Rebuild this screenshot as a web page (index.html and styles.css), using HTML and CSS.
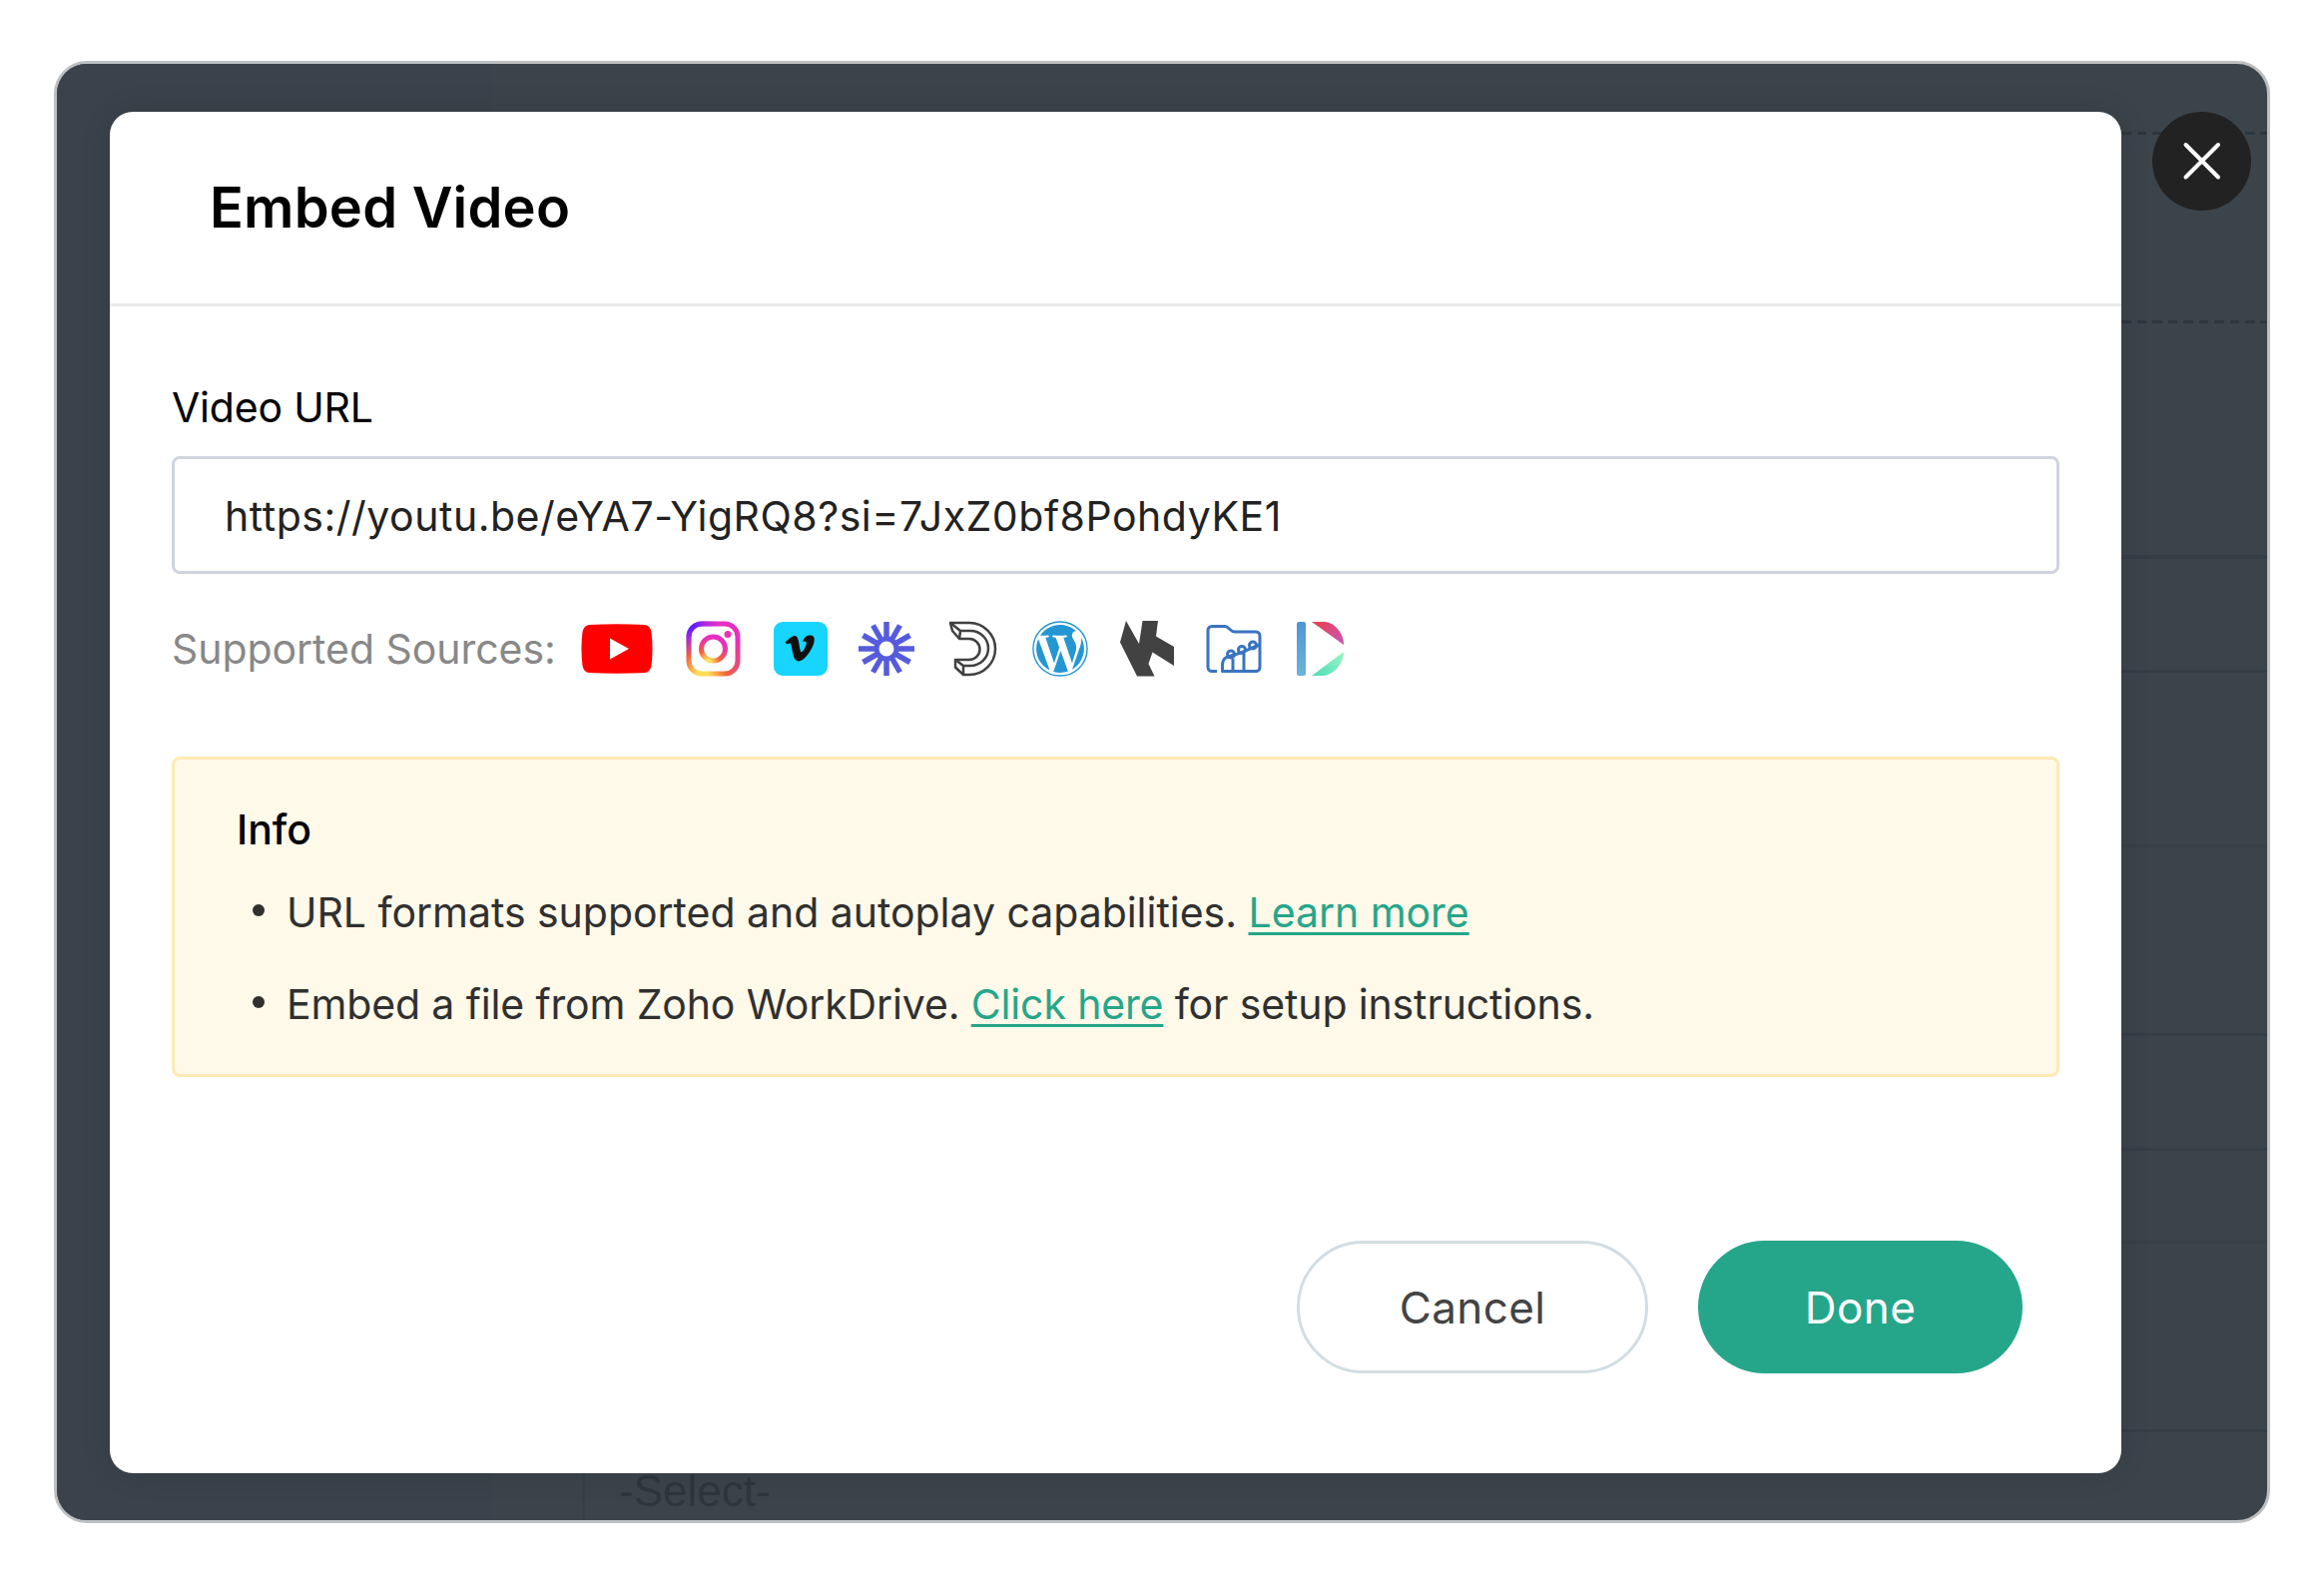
FILE: index.html
```html
<!DOCTYPE html>
<html lang="en">
<head>
    <meta charset="UTF-8">
    <title>Embed Video</title>
    <link rel="stylesheet" href="styles.css">
</head>
<body>
<div class="screen">
    <!-- form builder behind the popup -->
    <div class="form-bg">
        <div class="sidebar"></div>
        <div class="canvas">
            <div class="row dashed r1"></div>
            <div class="row dashed r2"></div>
            <div class="row thick r3"></div>
            <div class="row r4"></div>
            <div class="row light r5"></div>
            <div class="row r6"></div>
            <div class="row r7"></div>
            <div class="row light r8"></div>
            <div class="row r9"></div>
            <div class="select-box">-Select-</div>
        </div>
    </div>

    <div class="popup">
        <div class="popup-header"><h1>Embed Video</h1></div>
        <div class="popup-body">
            <label class="field-label" for="url">Video URL</label>
            <input class="url-input" id="url" type="text" value="https://youtu.be/eYA7-YigRQ8?si=7JxZ0bf8PohdyKE1">

            <div class="sources">
                <span class="sources-label">Supported Sources:</span>
                <svg class="icon-youtube" width="72" height="52" viewBox="0 0 72 52">
                    <path d="M8 2Q36 .5 64 2 69 2.500 70.500 9 72.500 26 70.500 43 69 49.500 64 50 36 51.500 8 50 3 49.500 1.500 43-.5 26 1.500 9 3 2.500 8 2z" fill="#f00"/>
                    <path d="M29 15.500v21L48 26z" fill="#fff"/>
                </svg>
                <svg class="icon-instagram" width="56" height="56" viewBox="0 0 56 56" fill="none">
                    <defs>
                        <radialGradient id="ig" cx=".28" cy="1.06" r="1.02">
                            <stop offset="0" stop-color="#fd5"/>
                            <stop offset=".12" stop-color="#fd5"/>
                            <stop offset=".5" stop-color="#f0603e"/>
                            <stop offset="1" stop-color="#e62fc0"/>
                        </radialGradient>
                        <radialGradient id="ig2" cx="0" cy="0" r=".65">
                            <stop offset="0" stop-color="#4a20ff"/>
                            <stop offset=".2" stop-color="#6a20ff"/>
                            <stop offset="1" stop-color="#b02cf0" stop-opacity="0"/>
                        </radialGradient>
                    </defs>
                    <rect x="3" y="3" width="49" height="50" rx="13" stroke="url(#ig)" stroke-width="5"/>
                    <rect x="3" y="3" width="49" height="50" rx="13" stroke="url(#ig2)" stroke-width="5"/>
                    <circle cx="27.500" cy="28" r="12" stroke="url(#ig)" stroke-width="5"/>
                    <circle cx="42" cy="13.500" r="3.500" fill="#ee2fb5"/>
                </svg>
                <svg class="icon-vimeo" width="54" height="54" viewBox="0 0 54 54">
                    <rect width="54" height="54" rx="9" fill="#17d5ff"/>
                    <path d="M11.500 20.500c3-2.500 6-6 9-6.500 5-.5 4.500 8 6 14 .8 3.500 2 3 4.500-1.500 3-5.500 2-8-2-6.500 1.500-4.500 4-7 8-6.500 4.500.5 4.500 5 2.500 10C37 30 30 39.500 25 39.500c-5.500 0-5.500-8.500-7.500-16-.8-2.500-1.500-2.500-4-1z" fill="#101010"/>
                </svg>
                <svg class="icon-loom" width="56" height="56" viewBox="0 0 56 56" fill="none" stroke="#565bdd" stroke-width="5.500">
                    <circle cx="28" cy="28" r="10" stroke-width="5"/>
                    <path d="M28 1v17M28 38v17M0 28h18M38 28h18M14.500 4.500l8 14M33.500 37.500l8 14M4.500 14.500l14 8M37.500 33.500l14 8M4.500 41.500l14-8M37.500 22.500l14-8M14.500 51.500l8-14M33.500 18.500l8-14"/>
                </svg>
                <svg class="icon-dacast" width="50" height="56" viewBox="0 0 50 56" fill="none" stroke="#404040" stroke-width="2.500" stroke-linejoin="round">
                    <path d="M2 2h19a26 26 0 0 1 0 52h-6l-8-7.500V39h14a10.500 10.500 0 0 0 0-21H11L4 10z"/>
                    <path d="M2 2l10 8h10a18 17.500 0 0 1 0 35h-7v9M12 10l-1 8M15 45l-8-6"/>
                </svg>
                <svg class="icon-wordpress" width="56" height="56" viewBox="0 0 24 24" fill="#2497d3">
                    <circle cx="12" cy="12" r="11.600" fill="none" stroke="#2497d3" stroke-width=".6"/>
                    <path transform="translate(.6 .6) scale(.95)" d="M21.469 6.825c.84 1.537 1.318 3.300 1.318 5.175 0 3.979-2.156 7.456-5.363 9.325l3.295-9.527c.615-1.540.82-2.771.82-3.864 0-.405-.026-.78-.07-1.110m-7.981.105c.647-.03 1.232-.105 1.232-.105.582-.075.514-.93-.067-.899 0 0-1.755.135-2.880.135-1.064 0-2.850-.15-2.850-.15-.585-.03-.661.855-.075.885 0 0 .54.061 1.125.09l1.680 4.605-2.370 7.080L5.354 6.900c.649-.03 1.234-.1 1.234-.1.585-.075.516-.93-.065-.896 0 0-1.746.138-2.874.138-.2 0-.438-.008-.69-.015C4.911 3.150 8.235 1.215 12 1.215c2.809 0 5.365 1.072 7.286 2.833-.046-.003-.091-.009-.141-.009-1.060 0-1.812.923-1.812 1.914 0 .89.513 1.643 1.060 2.531.411.72.89 1.643.89 2.977 0 .915-.354 1.994-.821 3.479l-1.075 3.585-3.900-11.610.001.014zM12 22.784c-1.059 0-2.081-.153-3.048-.437l3.237-9.406 3.315 9.087c.024.053.05.101.078.149-1.120.393-2.325.609-3.582.609M1.211 12c0-1.564.336-3.050.935-4.390L7.290 21.709C3.694 19.960 1.212 16.271 1.211 12"/>
                </svg>
                <svg class="icon-kinescope" width="56" height="56" viewBox="0 0 56 56">
                    <path d="M6 0l13 23L22.500 0H38l-2 15.500L54 26v19L32.500 31.500 28.500 43l6 12.500H17L0 21.500z" fill="#424242"/>
                </svg>
                <svg class="icon-workdrive" width="56" height="56" viewBox="0 0 56 56" fill="none" stroke="#3a74bf" stroke-width="3" stroke-linejoin="round">
                    <path d="M11 50.500H6a4 4 0 0 1-4-4V9.500a4 4 0 0 1 4-4h13c4 0 5 5.500 10 5.500h21a4 4 0 0 1 4 4v31.500a4 4 0 0 1-4 4H16.500v-6c0-8 6-9 12-10.500s13-5 25-10M27 50V38M38 50V33"/>
                    <circle cx="25" cy="33.500" r="3.500"/>
                    <circle cx="36" cy="29" r="3.500"/>
                    <circle cx="47" cy="24.500" r="3.500"/>
                </svg>
                <svg class="icon-dyntube" width="50" height="56" viewBox="0 0 50 56">
                    <defs>
                        <linearGradient id="d1" x1="0" y1="0" x2="0" y2="1"><stop offset="0" stop-color="#4f96d2"/><stop offset="1" stop-color="#6ab4dc"/></linearGradient>
                        <linearGradient id="d2" x1="0" y1="0" x2="1" y2="1"><stop offset="0" stop-color="#e8404c"/><stop offset="1" stop-color="#cb55b8"/></linearGradient>
                        <linearGradient id="d3" x1="0" y1="1" x2="1" y2="0"><stop offset="0" stop-color="#4bdcb8"/><stop offset="1" stop-color="#9df6c8"/></linearGradient>
                    </defs>
                    <rect y="1" width="9" height="54" rx="2" fill="url(#d1)"/>
                    <path d="M15 1h13c10 1 19 11 19 23z" fill="url(#d2)"/>
                    <path d="M15 55h11c11-1 21-12 21-24z" fill="url(#d3)"/>
                </svg>
            </div>

            <div class="info">
                <h2>Info</h2>
                <ul>
                    <li>URL formats supported and autoplay capabilities. <a href="#">Learn more</a></li>
                    <li>Embed a file from Zoho WorkDrive. <a href="#">Click here</a> for setup instructions.</li>
                </ul>
            </div>

            <div class="actions">
                <button class="btn cancel">Cancel</button>
                <button class="btn done">Done</button>
            </div>
        </div>
    </div>

    <button class="close" aria-label="Close">
        <svg width="40" height="40" viewBox="0 0 40 40" stroke="#fff" stroke-width="4" stroke-linecap="round"><path d="M3.500 3l32.500 32.500M36 3L3.500 35.500"/></svg>
    </button>
</div>
</body>
</html>
```
FILE: styles.css
```css
*{
    margin:0;
    padding:0;
    box-sizing: border-box;
}
body{
    padding:61px 54px 0;
    background: #fff;
    font-family: Inter, "Liberation Sans", sans-serif;
}
.screen{
    position: relative;
    display: flex;
    align-items: flex-start;
    gap:31px;
    width:2220px;
    height:1465px;
    padding:48px 0 0 53px;
    border:3px solid #bdbfc1;
    border-radius: 33px;
    background-color: #3c444b;
    overflow: hidden;
}

/* background form */
.form-bg{
    position: absolute;
    top:0;
    left:0;
    right:0;
    bottom:0;
    display: flex;
}
.sidebar{
    width:436px;
    background-color: #3a424b;
}
.canvas{
    flex:1;
    position: relative;
}
.row{
    position: absolute;
    left:0;
    right:0;
    height:3px;
    background-color: #343e47;
}
.row.thick{
    height:4px;
}
.row.light{
    background-color: #394148;
}
.row.dashed{
    left:1632px;
    background: repeating-linear-gradient(90deg, #2f373e 0 9.5px, transparent 9.5px 15.5px);
}
.r1{ top:68px; }
.r2{ top:257px; }
.r3{ top:492px; }
.r4{ top:607px; }
.r5{ top:782px; }
.r6{ top:971px; }
.r7{ top:1086px; }
.r8{ top:1179px; }
.r9{ top:1368px; }
.select-box{
    position: absolute;
    left:90px;
    bottom:0;
    height:90px;
    padding:36px 0 0 34px;
    border-left:3px solid #36404a;
    font:44px/50px "Liberation Sans", sans-serif;
    color:#2e363d;
}

/* popup */
.popup{
    position: relative;
    width:2015px;
    height:1364px;
    border-radius: 23px;
    background-color: #fff;
    box-shadow: 0 0 30px rgba(0,0,0,.12);
}
.popup-header{
    height:195px;
    padding:62px 0 0 100px;
    border-bottom:3px solid #e9e9e9;
}
.popup-header h1{
    font-size: 56px;
    line-height: 68px;
    font-weight: 600;
    letter-spacing: .2px;
    color:#000;
}
.popup-body{
    padding:76px 62px 0;
}
.field-label{
    display: block;
    height:74px;
    font-size: 41px;
    line-height: 50px;
    letter-spacing: -.2px;
    color:#000;
}
.url-input{
    display: block;
    width:100%;
    height:118px;
    padding:2px 50px 0;
    border:3px solid #cfd4df;
    border-radius: 8px;
    font-family: inherit;
    font-size: 41px;
    letter-spacing: .52px;
    color:#222;
    outline: none;
}
.sources{
    display: flex;
    align-items: center;
    height:56px;
    margin-top:47px;
}
.sources svg{
    flex:none;
}
.sources-label{
    width:410px;
    font-size: 41px;
    letter-spacing: -.05px;
    white-space: nowrap;
    color:#888;
}
.icon-instagram{ margin-left:33px; }
.icon-vimeo{ margin-left:32px; }
.icon-loom{ margin-left:31px; }
.icon-dacast{ margin-left:34px; }
.icon-wordpress{ margin-left:34px; }
.icon-kinescope{ margin-left:32px; }
.icon-workdrive{ margin-left:30px; }
.icon-dyntube{ margin-left:35px; }

.info{
    height:321px;
    margin-top:80px;
    padding:45px 62px 0;
    border:3px solid #ffeab5;
    border-radius: 8px;
    background-color: #fff9e9;
    font-size: 41px;
}
.info h2{
    font-size: 41px;
    line-height: 50px;
    font-weight: 500;
    color:#000;
}
.info ul{
    list-style: none;
    margin-top:12px;
}
.info li{
    display: flex;
    align-items: center;
    height:92px;
    white-space: pre;
    letter-spacing: -.03px;
    color:#303030;
}
.info li:last-child{
    letter-spacing: -.14px;
}
.info li:before{
    content:'';
    width:12px;
    height:12px;
    margin:-5px 22px 0 16px;
    border-radius: 50%;
    background-color: #303030;
}
.info a{
    color:#25a68a;
    text-decoration-thickness: 3px;
    text-underline-offset: 5px;
}

.actions{
    display: flex;
    justify-content: flex-end;
    gap:50px;
    margin-top:164px;
    padding-right:37px;
}
.btn{
    height:133px;
    border-radius: 67px;
    font-family: inherit;
    font-size: 44px;
    letter-spacing: .4px;
    cursor: pointer;
}
.cancel{
    width:352px;
    border:3px solid #d3dde2;
    background-color: #fff;
    color:#444;
}
.done{
    width:325px;
    border:0;
    background-color: #25a68a;
    color:#fff;
}

.close{
    position: relative;
    display: flex;
    align-items: center;
    justify-content: center;
    width:99px;
    height:99px;
    border:0;
    border-radius: 50%;
    background-color: #222;
    cursor: pointer;
}
```
